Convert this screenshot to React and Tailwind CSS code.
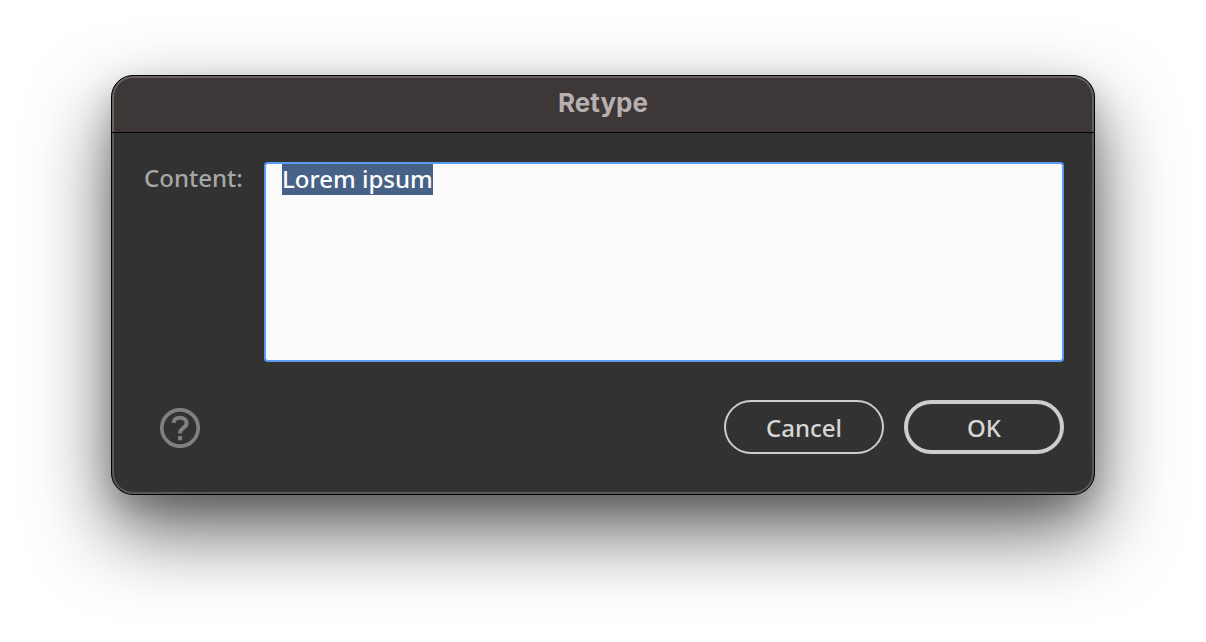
import { useEffect, useRef } from "react";

function HelpIcon() {
  return (
    <svg viewBox="0 0 40 40" className="size-10" fill="none" aria-hidden="true">
      <circle cx="20" cy="20" r="18.2" stroke="#808080" strokeWidth="3.7" />
      <path
        d="M13.400 14.800C14 11.300 16.400 9.800 20 9.800c4.100 0 6.600 2 6.600 5.200 0 2.600-1.400 3.800-3.400 5.200-2 1.400-3.100 2.200-3.100 4.400v1"
        stroke="#808080"
        strokeWidth="4"
      />
      <path d="M18 28h4.200v4.200h-4.200z" fill="#808080" />
    </svg>
  );
}

export default function App() {
  const content = useRef(null);

  useEffect(() => {
    content.current.focus();
    content.current.select();
  }, []);

  return (
    <main className="min-h-screen overflow-hidden bg-white px-[111px] py-[75px] font-['Noto_Sans',sans-serif] text-2xl font-medium">
      <section
        role="dialog"
        aria-labelledby="dialog-title"
        className="overflow-hidden rounded-[22px] border border-black bg-[#323232] shadow-[0_36px_80px_rgba(0,0,0,0.62),0_14px_30px_rgba(0,0,0,0.18)]"
      >
        <header className="border-b border-black">
          <div className="flex h-14 items-center justify-center rounded-t-[21px] border-2 border-b-0 border-[#656260] bg-[#3e3737] pb-1">
            <h1
              id="dialog-title"
              className="font-['Inter',sans-serif] text-[26px] leading-8 font-bold text-[#b6b1b0]"
            >
              Retype
            </h1>
          </div>
        </header>

        <form
          className="rounded-b-[21px] border-2 border-t-0 border-[#595959] pt-[29px] pr-7 pb-[38px] pl-[30px]"
          onSubmit={(event) => event.preventDefault()}
        >
          <div className="flex items-start">
            <label htmlFor="content" className="w-[120px] shrink-0 leading-8 text-[#a6a6a6]">
              Content:
            </label>
            <textarea
              id="content"
              ref={content}
              defaultValue="Lorem ipsum"
              spellCheck={false}
              className="h-[200px] min-w-0 flex-1 resize-none rounded border-2 border-[#5c9cf0] bg-[#fcfcfc] px-4 leading-[30px] text-black outline-none selection:bg-[#486287] selection:text-white"
            />
          </div>

          <div className="mt-[38px] flex items-center gap-5">
            <button type="button" aria-label="Help" className="mr-auto ml-4 pt-0.5">
              <HelpIcon />
            </button>
            <button
              type="button"
              className="h-[54px] w-40 rounded-[27px] border-2 border-[#cdcdcd] pt-0.5 text-[#d6d6d6]"
            >
              Cancel
            </button>
            <button
              type="submit"
              className="h-[54px] w-40 rounded-[27px] border-4 border-[#cdcdcd] pt-0.5 text-[#d6d6d6]"
            >
              OK
            </button>
          </div>
        </form>
      </section>
    </main>
  );
}
